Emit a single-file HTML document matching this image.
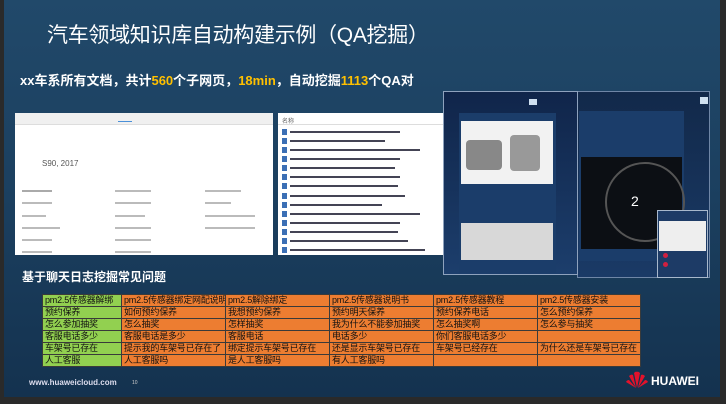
<!DOCTYPE html>
<html><head><meta charset="utf-8"><style>
*{margin:0;padding:0;box-sizing:border-box}
body{width:726px;height:404px;overflow:hidden;background:#2a2a2a;font-family:"Liberation Sans","Noto Sans CJK SC",sans-serif;position:relative}
.bg{position:absolute;left:4px;top:0;width:716px;height:397px;background:linear-gradient(180deg,#21496a 0%,#1b3f5f 50%,#14324f 100%)}
.a{position:absolute}
.t{color:#fff;white-space:nowrap}
table{border-collapse:collapse;font-size:9px;font-family:"Liberation Sans","Noto Sans CJK SC",sans-serif;letter-spacing:-0.2px}
td{height:11.7px;padding:0 2px;color:#111;border:1px solid #3a3a3a;background:#ed7d31;white-space:nowrap;overflow:hidden;line-height:11px;vertical-align:middle}
td.g{background:#92d050}
.w{background:#fff}
.line{position:absolute;height:2px;background:#8a8f96}
.fr{height:8.5px;margin-top:0.6px;display:flex;align-items:center}
.fr i{width:5px;height:6px;background:#3b6fb5;margin-right:3px}
.fr b{height:2px;background:#445}
</style></head><body>
<div class="bg"></div>
<div class="a t" style="left:47px;top:19px;font-size:21px;letter-spacing:-0.3px">汽车领域知识库自动构建示例（QA挖掘）</div>
<div class="a t" style="left:20px;top:70px;font-size:13px;font-weight:bold">xx车系所有文档，共计<span style="color:#ffc000">560</span>个子网页，<span style="color:#ffc000">18min</span>，自动挖掘<span style="color:#ffc000">1113</span>个QA对</div>

<div class="a w" style="left:15px;top:113px;width:258px;height:142px">
 <div style="height:12px;background:#f0f0f0;border-bottom:1px solid #ddd"></div>
 <div class="a" style="left:103px;top:8px;width:14px;height:1px;background:#4a90d9"></div>
 <div class="a" style="left:27px;top:46px;font-size:8px;color:#555">S90, 2017</div>
 <div class="line" style="left:7px;top:77px;width:30px;background:#aaa"></div>
 <div class="line" style="left:100px;top:77px;width:36px;background:#bbb"></div>
 <div class="line" style="left:190px;top:77px;width:36px;background:#bbb"></div>
 <div class="line" style="left:7px;top:89px;width:30px;background:#bbb"></div>
 <div class="line" style="left:100px;top:89px;width:36px;background:#bbb"></div>
 <div class="line" style="left:190px;top:89px;width:26px;background:#bbb"></div>
 <div class="line" style="left:7px;top:102px;width:24px;background:#bbb"></div>
 <div class="line" style="left:100px;top:102px;width:30px;background:#bbb"></div>
 <div class="line" style="left:190px;top:102px;width:50px;background:#bbb"></div>
 <div class="line" style="left:7px;top:114px;width:38px;background:#bbb"></div>
 <div class="line" style="left:100px;top:114px;width:36px;background:#bbb"></div>
 <div class="line" style="left:190px;top:114px;width:50px;background:#bbb"></div>
 <div class="line" style="left:7px;top:126px;width:30px;background:#bbb"></div>
 <div class="line" style="left:100px;top:126px;width:36px;background:#bbb"></div>
 <div class="line" style="left:7px;top:138px;width:30px;background:#bbb"></div>
 <div class="line" style="left:100px;top:138px;width:36px;background:#bbb"></div>
</div>
<div class="a w" style="left:278px;top:113px;width:165px;height:142px;overflow:hidden">
 <div style="height:12px;border-bottom:1px solid #ddd;font-size:6px;color:#666;padding:3px 4px">名称</div>
 <div style="padding:2px 4px">
 <div class="fr"><i></i><b style="width:110px"></b></div>
 <div class="fr"><i></i><b style="width:95px"></b></div>
 <div class="fr"><i></i><b style="width:130px"></b></div>
 <div class="fr"><i></i><b style="width:110px"></b></div>
 <div class="fr"><i></i><b style="width:105px"></b></div>
 <div class="fr"><i></i><b style="width:110px"></b></div>
 <div class="fr"><i></i><b style="width:108px"></b></div>
 <div class="fr"><i></i><b style="width:115px"></b></div>
 <div class="fr"><i></i><b style="width:92px"></b></div>
 <div class="fr"><i></i><b style="width:130px"></b></div>
 <div class="fr"><i></i><b style="width:110px"></b></div>
 <div class="fr"><i></i><b style="width:108px"></b></div>
 <div class="fr"><i></i><b style="width:118px"></b></div>
 <div class="fr"><i></i><b style="width:135px"></b></div>
 <div class="fr"><i></i><b style="width:110px"></b></div>
 </div>
</div>

<div class="a" style="left:577px;top:91px;width:133px;height:187px;background:linear-gradient(180deg,#12294a,#1a3a66);border:1px solid #6f86a6"></div>
<div class="a" style="left:443px;top:91px;width:135px;height:184px;background:linear-gradient(180deg,#10254a,#1c3e6c);border:1px solid #8ea2bd"></div>
<div class="a" style="left:459px;top:113px;width:97px;height:160px;background:#1b3d6a"></div>
<div class="a w" style="left:461px;top:121px;width:92px;height:63px;background:#f2f2f2"></div>
<div class="a" style="left:466px;top:140px;width:36px;height:30px;background:#888;border-radius:4px"></div>
<div class="a" style="left:510px;top:135px;width:30px;height:36px;background:#999;border-radius:4px"></div>
<div class="a" style="left:461px;top:223px;width:92px;height:37px;background:#d8d8d8"></div>
<div class="a" style="left:579px;top:111px;width:105px;height:150px;background:#1b3d6a"></div>
<div class="a" style="left:581px;top:157px;width:101px;height:92px;background:#0c0f14"></div>
<div class="a" style="left:605px;top:162px;width:80px;height:80px;border-radius:50%;border:2px solid #555"></div>
<div class="a t" style="left:631px;top:193px;font-size:14px">2</div>
<div class="a" style="left:657px;top:210px;width:51px;height:68px;background:#1d3b66;border:1px solid #a8b8cc"></div>
<div class="a w" style="left:659px;top:221px;width:47px;height:30px;background:#eee"></div>
<div class="a" style="left:663px;top:253px;width:5px;height:5px;border-radius:50%;background:#d02040"></div>
<div class="a" style="left:663px;top:262px;width:5px;height:5px;border-radius:50%;background:#d02040"></div>
<div class="a" style="left:529px;top:99px;width:8px;height:6px;background:#cfe0f0"></div>
<div class="a" style="left:700px;top:97px;width:8px;height:7px;background:#cfe0f0"></div>

<div class="a t" style="left:22px;top:268px;font-size:12px;font-weight:bold">基于聊天日志挖掘常见问题</div>
<table class="a" style="left:42px;top:294px;width:598px;table-layout:fixed">
<colgroup><col style="width:79px"><col style="width:104px"><col style="width:104px"><col style="width:104px"><col style="width:104px"><col style="width:103px"></colgroup>
<tr><td class="g">pm2.5传感器解绑</td><td>pm2.5传感器绑定网配说明</td><td>pm2.5解除绑定</td><td>pm2.5传感器说明书</td><td>pm2.5传感器教程</td><td>pm2.5传感器安装</td></tr>
<tr><td class="g">预约保养</td><td>如何预约保养</td><td>我想预约保养</td><td>预约明天保养</td><td>预约保养电话</td><td>怎么预约保养</td></tr>
<tr><td class="g">怎么参加抽奖</td><td>怎么抽奖</td><td>怎样抽奖</td><td>我为什么不能参加抽奖</td><td>怎么抽奖啊</td><td>怎么参与抽奖</td></tr>
<tr><td class="g">客服电话多少</td><td>客服电话是多少</td><td>客服电话</td><td>电话多少</td><td>你们客服电话多少</td><td></td></tr>
<tr><td class="g">车架号已存在</td><td>提示我的车架号已存在了</td><td>绑定提示车架号已存在</td><td>还是显示车架号已存在</td><td>车架号已经存在</td><td>为什么还是车架号已存在</td></tr>
<tr><td class="g">人工客服</td><td>人工客服吗</td><td>是人工客服吗</td><td>有人工客服吗</td><td></td><td></td></tr>
</table>

<div class="a t" style="left:29px;top:378px;font-size:8px;font-weight:bold;color:#dde">www.huaweicloud.com</div>
<div class="a t" style="left:132px;top:380px;font-size:5px;color:#ccc">10</div>
<svg class="a" style="left:626px;top:371px" width="22" height="18" viewBox="0 0 22 18">
<g fill="#e3122b"><path d="M11 17 L8 2 Q10 0 11 1 Z"/><path d="M11 17 L14 2 Q12 0 11 1 Z"/><path d="M10 17 L3 5 Q5 3 7 4 Z"/><path d="M12 17 L19 5 Q17 3 15 4 Z"/><path d="M10 17 L0 11 Q1 9 3 9 Z"/><path d="M12 17 L22 11 Q21 9 19 9 Z"/></g></svg>
<div class="a t" style="left:651px;top:374px;font-size:12px;font-weight:bold">HUAWEI</div>
</body></html>
